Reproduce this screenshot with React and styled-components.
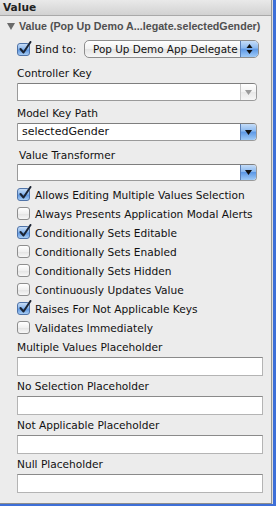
import React from "react"
import styled, { createGlobalStyle, css } from "styled-components"

const GlobalStyle = createGlobalStyle`
  html, body {
    margin: 0;
    padding: 0;
    background: #3d6fd8;
  }
  body {
    font-family: "DejaVu Sans", "Liberation Sans", sans-serif;
    font-size: 10.6px;
    color: #111;
  }
`

const Window = styled.div`
  display: flex;
  width: 276px;
  height: 506px;
  overflow: hidden;
`

const Panel = styled.div`
  width: 272px;
  height: 504px;
  box-sizing: border-box;
  background: #ececec;
  border-right: 1px solid #979797;
  border-bottom: 1px solid #8c8c8c;
  box-shadow: 1px 0 0 #dedede;
  display: flex;
  flex-direction: column;
`

const SectionHeader = styled.div`
  height: 15px;
  line-height: 15px;
  padding-left: 3px;
  font-weight: bold;
  color: #222;
  background: linear-gradient(#e9e9e9, #d2d2d2);
  border-bottom: 1px solid #a9a9a9;
`

const Disclosure = styled.div`
  height: 20px;
  display: flex;
  align-items: center;
  gap: 4px;
  padding-left: 7px;
  color: #505050;
  font-family: "Liberation Sans", Arial, sans-serif;
  font-size: 10.7px;
  font-weight: bold;
  white-space: nowrap;
  overflow: hidden;
`

const Triangle = styled.span`
  width: 0;
  height: 0;
  border-left: 4px solid transparent;
  border-right: 4px solid transparent;
  border-top: 7px solid #6a6a6a;
  margin-top: 1px;
`

const Body = styled.div`
  padding-left: 17px;
  display: flex;
  flex-direction: column;
`

const BindRow = styled.div`
  margin-top: 4px;
  height: 18px;
  display: flex;
  align-items: center;
`

const BindLabel = styled.span`
  margin-left: 5px;
  width: 49px;
`

const PopUp = styled.div`
  width: 175px;
  height: 18px;
  box-sizing: border-box;
  display: flex;
  border: 1px solid #8d8d8d;
  border-radius: 5px;
  background: linear-gradient(#ffffff, #f1f1f1 50%, #e3e3e3 51%, #f7f7f7);
  overflow: hidden;
`

const PopUpText = styled.span`
  flex: 1;
  padding-left: 8px;
  line-height: 16px;
  font-size: 10.4px;
  white-space: nowrap;
`

const blueGlass = css`
  background: linear-gradient(#c4dcf8, #8ab8ef 45%, #5c98e6 50%, #9fcaf6);
`

const Stepper = styled.span`
  width: 17px;
  ${blueGlass};
  border-left: 1px solid #5a7fb6;
  display: flex;
  align-items: center;
  justify-content: center;
`

const FieldLabel = styled.div`
  height: 14px;
  line-height: 14px;
  margin-top: ${({ $top }) => $top}px;
  padding-left: ${({ $indent }) => $indent || 0}px;
  white-space: nowrap;
`

const Combo = styled.div`
  margin-top: ${({ $top }) => $top}px;
  width: 240px;
  height: ${({ $h }) => $h || 18}px;
  box-sizing: border-box;
  display: flex;
  border: 1px solid #9a9a9a;
  border-top-color: #7e7e7e;
  border-radius: 0 4px 4px 0;
  background: #fff;
  overflow: hidden;
`

const ComboText = styled.span`
  flex: 1;
  padding-left: 4px;
  line-height: 16px;
  font-size: 11px;
`

const ComboButton = styled.span`
  width: 15px;
  display: flex;
  align-items: center;
  justify-content: center;
  border-left: 1px solid ${({ $enabled }) => ($enabled ? "#5a7fb6" : "#c6c6c6")};
  ${({ $enabled }) =>
    $enabled
      ? blueGlass
      : css`
          background: linear-gradient(#ffffff, #f2f2f2 50%, #e8e8e8 51%, #f6f6f6);
        `}
`

const CheckList = styled.div`
  margin-top: 4px;
  display: flex;
  flex-direction: column;
`

const CheckRow = styled.div`
  height: 19px;
  display: flex;
  align-items: center;
  gap: 5px;
  white-space: nowrap;
`

const Box = styled.span`
  width: 13px;
  height: 13px;
  box-sizing: border-box;
  border-radius: 3px;
  flex-shrink: 0;
  position: relative;
  ${({ $checked }) =>
    $checked
      ? css`
          border: 1px solid #4f73a8;
          background: linear-gradient(#c7ddf7, #8bb7ec 45%, #5f98e2 55%, #a8cdf4);
        `
      : css`
          border: 1px solid #8e8e8e;
          background: linear-gradient(#ffffff, #f0f0f0 50%, #e4e4e4 55%, #f7f7f7);
        `}
`

const CheckMark = styled.svg`
  position: absolute;
  left: 1px;
  top: -3px;
`

const TextField = styled.div`
  margin-top: 3px;
  width: 246px;
  height: 19px;
  box-sizing: border-box;
  background: #fff;
  border: 1px solid #b4b4b4;
  border-top-color: #8a8a8a;
`

const PlaceholderBlock = styled.div`
  margin-top: 3px;
`

const Checkbox = ({ checked }) => (
  <Box $checked={checked}>
    {checked && (
      <CheckMark width="13" height="14" viewBox="0 0 13 14">
        <path
          d="M1.5 8 L4.5 11.5 L11.5 1"
          fill="none"
          stroke="#1b2433"
          strokeWidth="2"
          strokeLinecap="round"
          strokeLinejoin="round"
        />
      </CheckMark>
    )}
  </Box>
)

const DownArrow = ({ color }) => (
  <svg width="7" height="5" viewBox="0 0 7 5">
    <path d="M0 0 H7 L3.5 5 Z" fill={color} />
  </svg>
)

const UpDown = () => (
  <svg width="7" height="12" viewBox="0 0 7 12">
    <path d="M0.5 5 L3.5 1 L6.5 5 Z" fill="#111" />
    <path d="M0.5 7 L3.5 11 L6.5 7 Z" fill="#111" />
  </svg>
)

const options = [
  { label: "Allows Editing Multiple Values Selection", checked: true },
  { label: "Always Presents Application Modal Alerts", checked: false },
  { label: "Conditionally Sets Editable", checked: true },
  { label: "Conditionally Sets Enabled", checked: false },
  { label: "Conditionally Sets Hidden", checked: false },
  { label: "Continuously Updates Value", checked: false },
  { label: "Raises For Not Applicable Keys", checked: true },
  { label: "Validates Immediately", checked: false },
]

const placeholders = [
  "Multiple Values Placeholder",
  "No Selection Placeholder",
  "Not Applicable Placeholder",
  "Null Placeholder",
]

export default function App() {
  return (
    <>
      <GlobalStyle />
      <Window>
        <Panel>
          <SectionHeader>Value</SectionHeader>
          <Disclosure>
            <Triangle />
            Value (Pop Up Demo A...legate.selectedGender)
          </Disclosure>
          <Body>
            <BindRow>
              <Checkbox checked />
              <BindLabel>Bind to:</BindLabel>
              <PopUp>
                <PopUpText>Pop Up Demo App Delegate</PopUpText>
                <Stepper>
                  <UpDown />
                </Stepper>
              </PopUp>
            </BindRow>

            <FieldLabel $top={8}>Controller Key</FieldLabel>
            <Combo $top={3}>
              <ComboText />
              <ComboButton>
                <DownArrow color="#9a9a9a" />
              </ComboButton>
            </Combo>

            <FieldLabel $top={5}>Model Key Path</FieldLabel>
            <Combo $top={3}>
              <ComboText>selectedGender</ComboText>
              <ComboButton $enabled>
                <DownArrow color="#111" />
              </ComboButton>
            </Combo>

            <FieldLabel $top={7} $indent={2}>
              Value Transformer
            </FieldLabel>
            <Combo $top={2} $h={17}>
              <ComboText />
              <ComboButton $enabled>
                <DownArrow color="#111" />
              </ComboButton>
            </Combo>

            <CheckList>
              {options.map(o => (
                <CheckRow key={o.label}>
                  <Checkbox checked={o.checked} />
                  {o.label}
                </CheckRow>
              ))}
            </CheckList>

            {placeholders.map(p => (
              <PlaceholderBlock key={p}>
                <FieldLabel $top={0}>{p}</FieldLabel>
                <TextField />
              </PlaceholderBlock>
            ))}
          </Body>
        </Panel>
      </Window>
    </>
  )
}
